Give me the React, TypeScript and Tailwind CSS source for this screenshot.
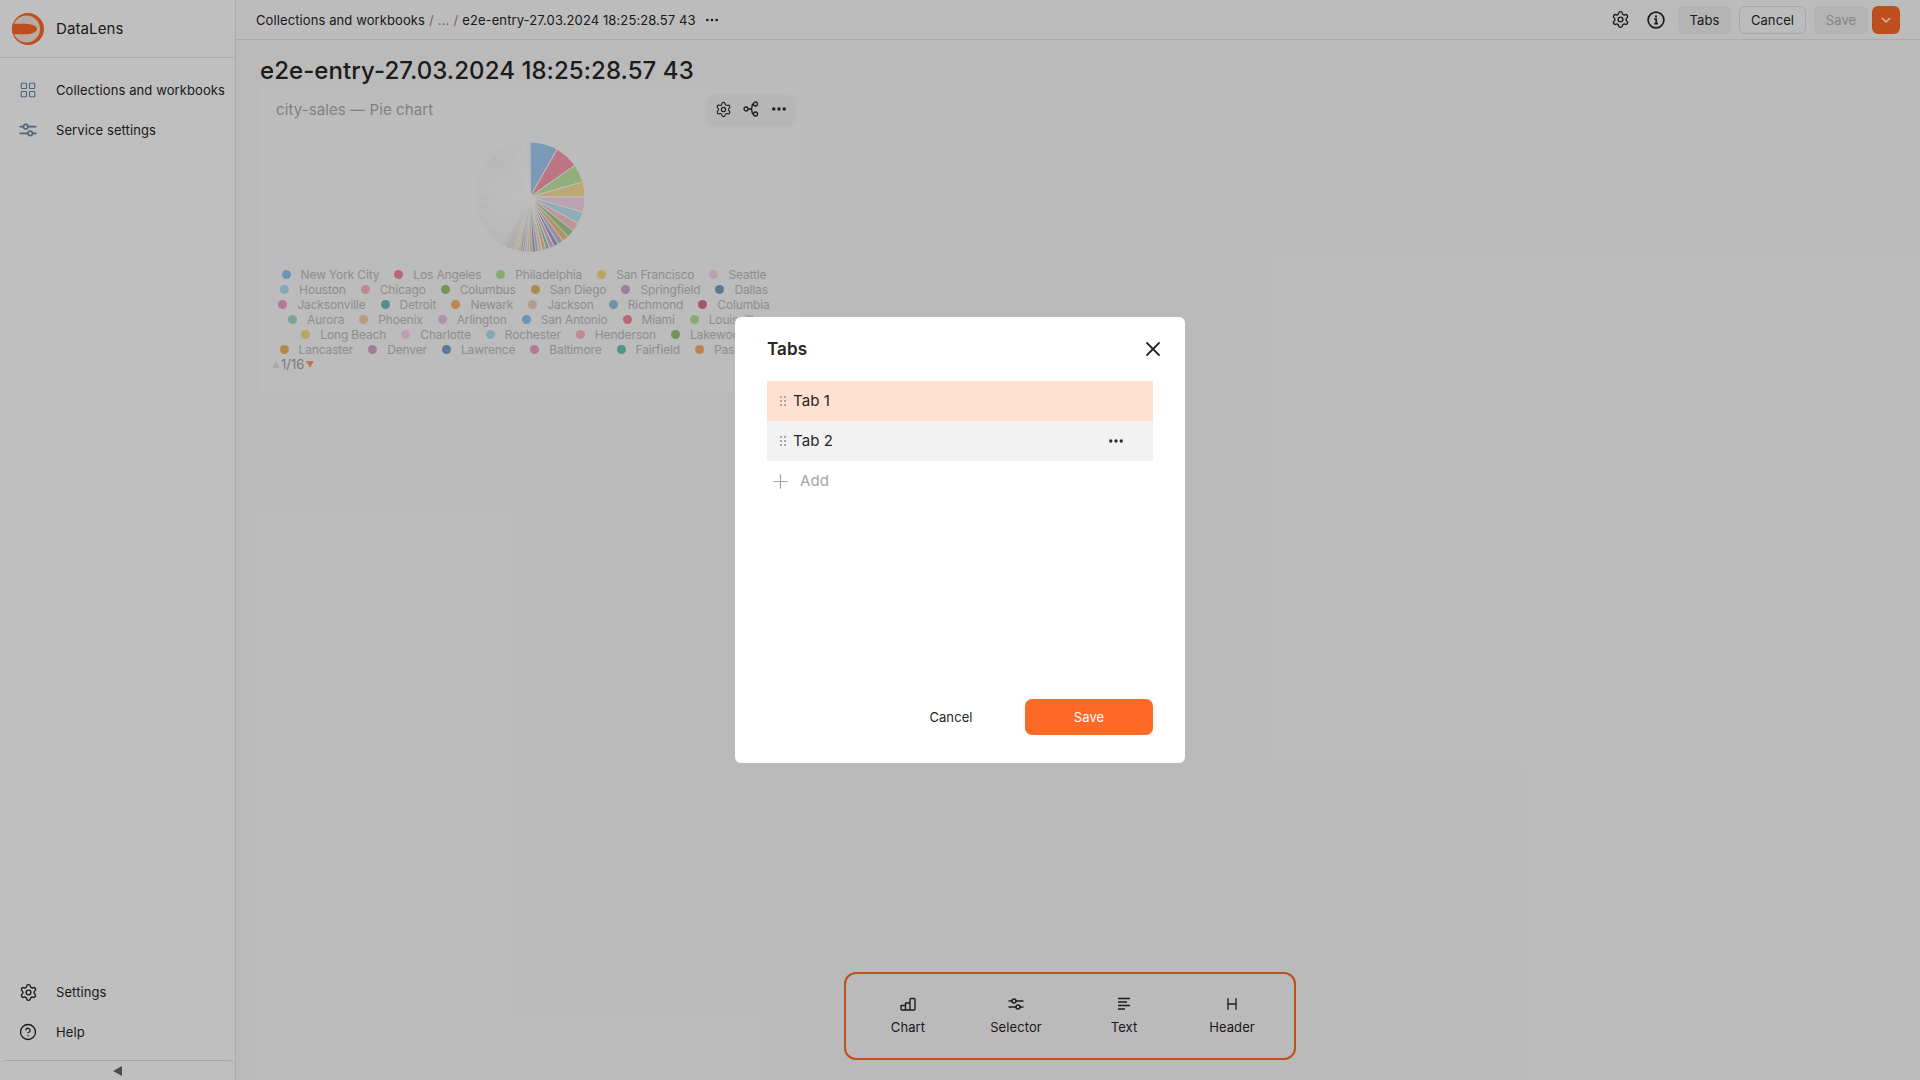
import { CircleHelp, Ellipsis, Heading, LayoutGrid, Plus, Settings, X } from "lucide-react";

const PALETTE = [
  "#4DA2F1", "#FF3D64", "#8AD554", "#FFC636", "#FFB9DD", "#84D1EE", "#FF91A1", "#54A520",
  "#DB9100", "#BA74B3", "#1F68A9", "#ED65A9", "#0FA08D", "#FF7E00", "#E8B0A4", "#52A6C5",
  "#BE2443", "#70C1AF", "#FFB46C", "#DCA3D7",
];

const LEGEND = [
  ["New York City", "Los Angeles", "Philadelphia", "San Francisco", "Seattle"],
  ["Houston", "Chicago", "Columbus", "San Diego", "Springfield", "Dallas"],
  ["Jacksonville", "Detroit", "Newark", "Jackson", "Richmond", "Columbia"],
  ["Aurora", "Phoenix", "Arlington", "San Antonio", "Miami", "Louisville"],
  ["Long Beach", "Charlotte", "Rochester", "Henderson", "Lakewood"],
  ["Lancaster", "Denver", "Lawrence", "Baltimore", "Fairfield", "Pasadena"],
];

function Sliders({ size = 18 }: { size?: number }) {
  return (
    <svg width={size} height={size} viewBox="0 0 16 16" fill="none" stroke="currentColor" strokeWidth="1.4">
      <path d="M1 5h3M8 5h7M1 11h7M12 11h3" strokeLinecap="round" />
      <circle cx="6" cy="5" r="2" />
      <circle cx="10" cy="11" r="2" />
    </svg>
  );
}

function Logo() {
  return (
    <svg width="32" height="32" viewBox="0 0 32 32">
      <circle cx="16" cy="16" r="16" fill="#ff6928" />
      <circle cx="14.500" cy="16" r="13.500" fill="#f6e4da" />
      <path d="M0.300 13C0.500 12 0.800 11 1.200 10.700H12C20 10.700 25 13 25 16S20 21.300 12 21.300H1.200C0.800 21 0.500 20 0.300 19C0 17 0 15 0.300 13Z" fill="#ff6928" />
    </svg>
  );
}

function InfoIcon() {
  return (
    <svg width="18" height="18" viewBox="0 0 16 16" fill="none" stroke="currentColor">
      <circle cx="8" cy="8" r="7" strokeWidth="1.5" />
      <path d="M6.500 7.300H8.200V11.300M6.500 11.300H9.800" strokeWidth="1.5" />
      <circle cx="8" cy="4.800" r="1" fill="currentColor" stroke="none" />
    </svg>
  );
}

function ShareNodes() {
  return (
    <svg width="16" height="16" viewBox="0 0 16 16" fill="none" stroke="currentColor" strokeWidth="1.3">
      <circle cx="3" cy="8" r="2" />
      <circle cx="12.500" cy="3" r="2" />
      <circle cx="12.500" cy="13" r="2" />
      <path d="M5 8h2.500c1.500 0 1.500-1 1.500-2.500S9.500 3 10.500 3M7.500 8C9 8 9 9 9 10.500S9.500 13 10.500 13" />
    </svg>
  );
}

function ChartIcon() {
  return (
    <svg width="16" height="16" viewBox="0 0 16 16" fill="none" stroke="currentColor" strokeWidth="1.4" strokeLinejoin="round">
      <path d="M1 9.500h4.500V14H2a1 1 0 0 1-1-1ZM5.500 7H10v7H5.500ZM10 3.500a1 1 0 0 1 1-1h3a1 1 0 0 1 1 1V13a1 1 0 0 1-1 1h-4Z" />
    </svg>
  );
}

function TextIcon() {
  return (
    <svg width="16" height="16" viewBox="0 0 16 16" fill="none" stroke="currentColor" strokeWidth="1.4">
      <path d="M2 2.500h12M2 6h9M2 9.500h12M2 13h7" />
    </svg>
  );
}

function DragDots() {
  return (
    <div className="grid grid-cols-2 gap-x-[2px] gap-y-[2px]">
      {[0, 1, 2, 3, 4, 5].map((i) => (
        <span key={i} className="size-[2px] bg-[#a8a8a8]" />
      ))}
    </div>
  );
}

function polar(r: number, deg: number) {
  const a = ((deg - 90) * Math.PI) / 180;
  return [60 + r * Math.cos(a), 60 + r * Math.sin(a)];
}

function PieChart() {
  const big = [29.7, 25, 19.3, 16, 16, 12.6, 9.4, 8, 7, 6, 5, 5, 4, 4, 4];
  const widths = [...big];
  let total = big.reduce((s, w) => s + w, 0);
  let i = 0;
  while (total < 360) {
    const w = Math.min(Math.max(0.5, 3.4 * Math.pow(0.93, i)), 360 - total);
    widths.push(w);
    total += w;
    i++;
  }
  let start = 0;
  return (
    <svg width="120" height="120" viewBox="0 0 120 120">
      {widths.map((w, n) => {
        const [x1, y1] = polar(55, start);
        const [x2, y2] = polar(55, start + w);
        start += w;
        return (
          <path
            key={n}
            d={`M60 60L${x1} ${y1}A55 55 0 0 1 ${x2} ${y2}Z`}
            fill={PALETTE[n % PALETTE.length]}
            fillOpacity={n < 40 ? 0.5 : 0.22}
            stroke="#ffffff"
            strokeWidth={n < 15 ? 1 : n < 40 ? 0.6 : 0.45}
          />
        );
      })}
    </svg>
  );
}

function Legend() {
  let n = 0;
  return (
    <div className="flex flex-col pl-[12px] pr-[24px] text-[12px] leading-[15px] tracking-[-0.15px] text-[#bdbdbd]">
      {LEGEND.map((row, r) => (
        <div key={r} className="flex justify-center gap-[15px] whitespace-nowrap">
          {row.map((name) => {
            const color = PALETTE[n++ % PALETTE.length];
            return (
              <span key={name} className="flex items-center gap-[10px]">
                <span className="size-[9px] rounded-full opacity-60" style={{ backgroundColor: color }} />
                {name}
              </span>
            );
          })}
        </div>
      ))}
      <div className="flex items-center gap-[1px] tracking-normal text-[#a3a3a3]">
        <span className="size-0 border-x-[4px] border-b-[7px] border-x-transparent border-b-[#e4e4e4]" />
        <span className="text-[13px]">1/16</span>
        <span className="ml-[1px] size-0 border-x-[4px] border-t-[7px] border-x-transparent border-t-[#ff9c66]" />
      </div>
    </div>
  );
}

function NavItem({ icon, label, muted }: { icon: React.ReactNode; label: string; muted?: boolean }) {
  return (
    <div className="flex h-[40px] items-center">
      <span className={`flex w-[56px] justify-center ${muted ? "text-[#6d87a3]" : "text-[#262626]"}`}>{icon}</span>
      <span className="whitespace-nowrap">{label}</span>
    </div>
  );
}

function DockItem({ icon, label }: { icon: React.ReactNode; label: string }) {
  return (
    <div className="flex w-[108px] flex-col items-center gap-[6px]">
      {icon}
      <span className="leading-[18px]">{label}</span>
    </div>
  );
}

export default function App() {
  return (
    <div className="relative flex h-screen w-full overflow-hidden bg-[#f9f9f9] font-['Inter',sans-serif] text-[13px] leading-[18px] tracking-[0.1px] text-[#262626]">
      <aside className="flex w-[236px] shrink-0 flex-col border-r border-[#e5e5e5] bg-white">
        <div className="flex h-[58px] shrink-0 items-center gap-[12px] border-b border-[#e5e5e5] pl-[12px] text-[15px]">
          <Logo />
          DataLens
        </div>
        <nav className="flex flex-col pt-[12px]">
          <NavItem muted icon={<LayoutGrid size={18} strokeWidth={1.5} />} label="Collections and workbooks" />
          <NavItem muted icon={<Sliders />} label="Service settings" />
        </nav>
        <div className="mt-auto flex flex-col pb-[8px]">
          <NavItem icon={<Settings size={19} strokeWidth={1.75} />} label="Settings" />
          <NavItem icon={<CircleHelp size={18} strokeWidth={1.75} />} label="Help" />
        </div>
        <div className="flex h-[20px] shrink-0 items-center justify-center rounded-t-[6px] border-t border-[#dcdcdc]">
          <span className="size-0 border-y-[5px] border-r-[9px] border-y-transparent border-r-[#666666]" />
        </div>
      </aside>

      <main className="flex min-w-0 flex-1 flex-col">
        <header className="flex h-[40px] shrink-0 items-center border-b border-[#e5e5e5] bg-[#fbfbfb] pl-[20px] pr-[20px]">
          <span className="whitespace-nowrap">Collections and workbooks</span>
          <span className="mx-[4px] text-[#8c8c8c]">/</span>
          <span className="text-[#8c8c8c]">...</span>
          <span className="mx-[4px] text-[#8c8c8c]">/</span>
          <span className="whitespace-nowrap">e2e-entry-27.03.2024 18:25:28.57 43</span>
          <Ellipsis size={16} className="ml-[8px]" />
          <div className="ml-auto flex items-center">
            <Settings size={19} strokeWidth={1.75} />
            <span className="ml-[17px] flex">
              <InfoIcon />
            </span>
            <span className="ml-[13px] flex h-[28px] w-[53px] items-center justify-center rounded-[6px] bg-[#f0f0f0]">Tabs</span>
            <span className="ml-[8px] flex h-[28px] w-[67px] items-center justify-center rounded-[6px] border border-[#dddddd]">Cancel</span>
            <span className="ml-[8px] flex h-[28px] w-[54px] items-center justify-center rounded-[6px] bg-[#f0f0f0] text-[#b0b0b0]">Save</span>
            <span className="ml-[4px] flex h-[28px] w-[28px] items-center justify-center rounded-[6px] bg-[#ff6928] text-white">
              <svg width="12" height="12" viewBox="0 0 12 12" fill="none" stroke="currentColor" strokeWidth="1.5">
                <path d="M2 4l4 4 4-4" />
              </svg>
            </span>
          </div>
        </header>

        <div className="min-h-0 flex-1 pl-[24px]">
          <h1 className="pt-[16px] text-[24px] font-medium leading-[30px] tracking-[0.07px] whitespace-nowrap">e2e-entry-27.03.2024 18:25:28.57 43</h1>
          <section className="relative mt-[2px] h-[304px] w-[540px] bg-[#fbfbfb]">
            <div className="pl-[16px] pt-[12px] text-[15px] leading-[20px] text-[#ababab]">city-sales — Pie chart</div>
            <div className="absolute right-[7px] top-[7px] flex h-[28px] w-[84px] items-center rounded-[6px] bg-[#f3f3f3] shadow-[0_2px_6px_rgba(0,0,0,0.08)]">
              <span className="flex w-[28px] justify-center">
                <Settings size={17} strokeWidth={1.6} />
              </span>
              <span className="flex w-[28px] justify-center">
                <ShareNodes />
              </span>
              <span className="flex w-[28px] justify-center">
                <Ellipsis size={18} strokeWidth={2.5} />
              </span>
            </div>
            <div className="mt-[17px] flex justify-center">
              <PieChart />
            </div>
            <div className="mt-[10px]">
              <Legend />
            </div>
          </section>
        </div>

        <div className="mb-[20px] ml-[608px] flex h-[88px] w-[452px] shrink-0 items-center justify-center self-start rounded-[12px] border-2 border-[#ff6928]">
          <DockItem icon={<ChartIcon />} label="Chart" />
          <DockItem icon={<Sliders size={16} />} label="Selector" />
          <DockItem icon={<TextIcon />} label="Text" />
          <DockItem icon={<Heading size={16} strokeWidth={2} />} label="Header" />
        </div>
      </main>

      <div className="absolute inset-0 flex items-center justify-center bg-black/25">
        <div className="flex h-[446px] w-[450px] flex-col rounded-[6px] bg-white px-[32px] pb-[28px] pt-[22px] text-[#262626]">
          <div className="flex h-[20px] items-center justify-between">
            <span className="text-[17px] font-semibold leading-[20px]">Tabs</span>
            <X size={24} strokeWidth={1.8} className="mr-[-12px]" />
          </div>
          <div className="mt-[22px] flex flex-col text-[15px]">
            <div className="flex h-[40px] items-center gap-[7px] bg-[#ffe0d1] pl-[13px]">
              <DragDots />
              Tab 1
            </div>
            <div className="flex h-[40px] items-center gap-[7px] bg-[#f2f2f2] pl-[13px]">
              <DragDots />
              Tab 2
              <Ellipsis size={18} strokeWidth={2.5} className="ml-auto mr-[28px]" />
            </div>
            <div className="flex h-[40px] items-center gap-[8px] pl-[2px] text-[#a6a6a6]">
              <Plus size={23} strokeWidth={1.3} />
              Add
            </div>
          </div>
          <div className="mt-auto flex justify-end gap-[10px]">
            <button className="h-[36px] w-[128px] rounded-[7px]">Cancel</button>
            <button className="h-[36px] w-[128px] rounded-[7px] bg-[#ff6928] text-white">Save</button>
          </div>
        </div>
      </div>
    </div>
  );
}
